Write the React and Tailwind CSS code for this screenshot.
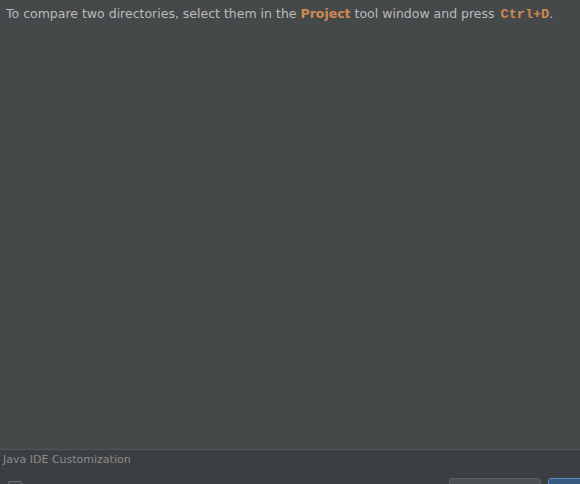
import React from 'react'

const App = () => {
    return (
        <div className="w-[580px] h-[484px] overflow-hidden flex flex-col bg-[#45494a]" style={{ fontFamily: 'Tahoma, "DejaVu Sans", sans-serif' }}>
            <div className="flex-1 px-[6px] pt-[5px]">
                <p className="text-[12.5px] leading-[18px] text-[#bbbbbb] whitespace-nowrap">
                    To compare two directories, select them in the{' '}
                    <span className="font-bold text-[#cc8a53]">Project</span> tool window and press{' '}
                    <span className="font-bold text-[#cc8a53] text-[13.5px] ml-[2px]" style={{ fontFamily: '"Liberation Mono", monospace' }}>Ctrl+D</span>.
                </p>
            </div>
            <div className="h-[35px] shrink-0 border-t border-[#555759] bg-[#3c3f41] flex flex-col overflow-hidden">
                <div className="pl-[3px] pt-[3px] text-[11px] leading-[14px] text-[#8c8c8c]">Java IDE Customization</div>
                <div className="flex items-start pl-[8px] pt-[11px] gap-[7px]">
                    <div className="mt-[3px] w-[14px] h-[14px] shrink-0 rounded-[2px] border border-[#6b6b6b] bg-[#43494a]" />
                    <div className="flex-1" />
                    <div className="w-[92px] h-[24px] shrink-0 rounded-[3px] border border-[#5e6060] bg-[#4c5052]" />
                    <div className="w-[92px] h-[24px] shrink-0 -mr-[60px] rounded-[3px] border border-[#5e8ebf] bg-[#365880]" />
                </div>
            </div>
        </div>
    )
}

export default App
